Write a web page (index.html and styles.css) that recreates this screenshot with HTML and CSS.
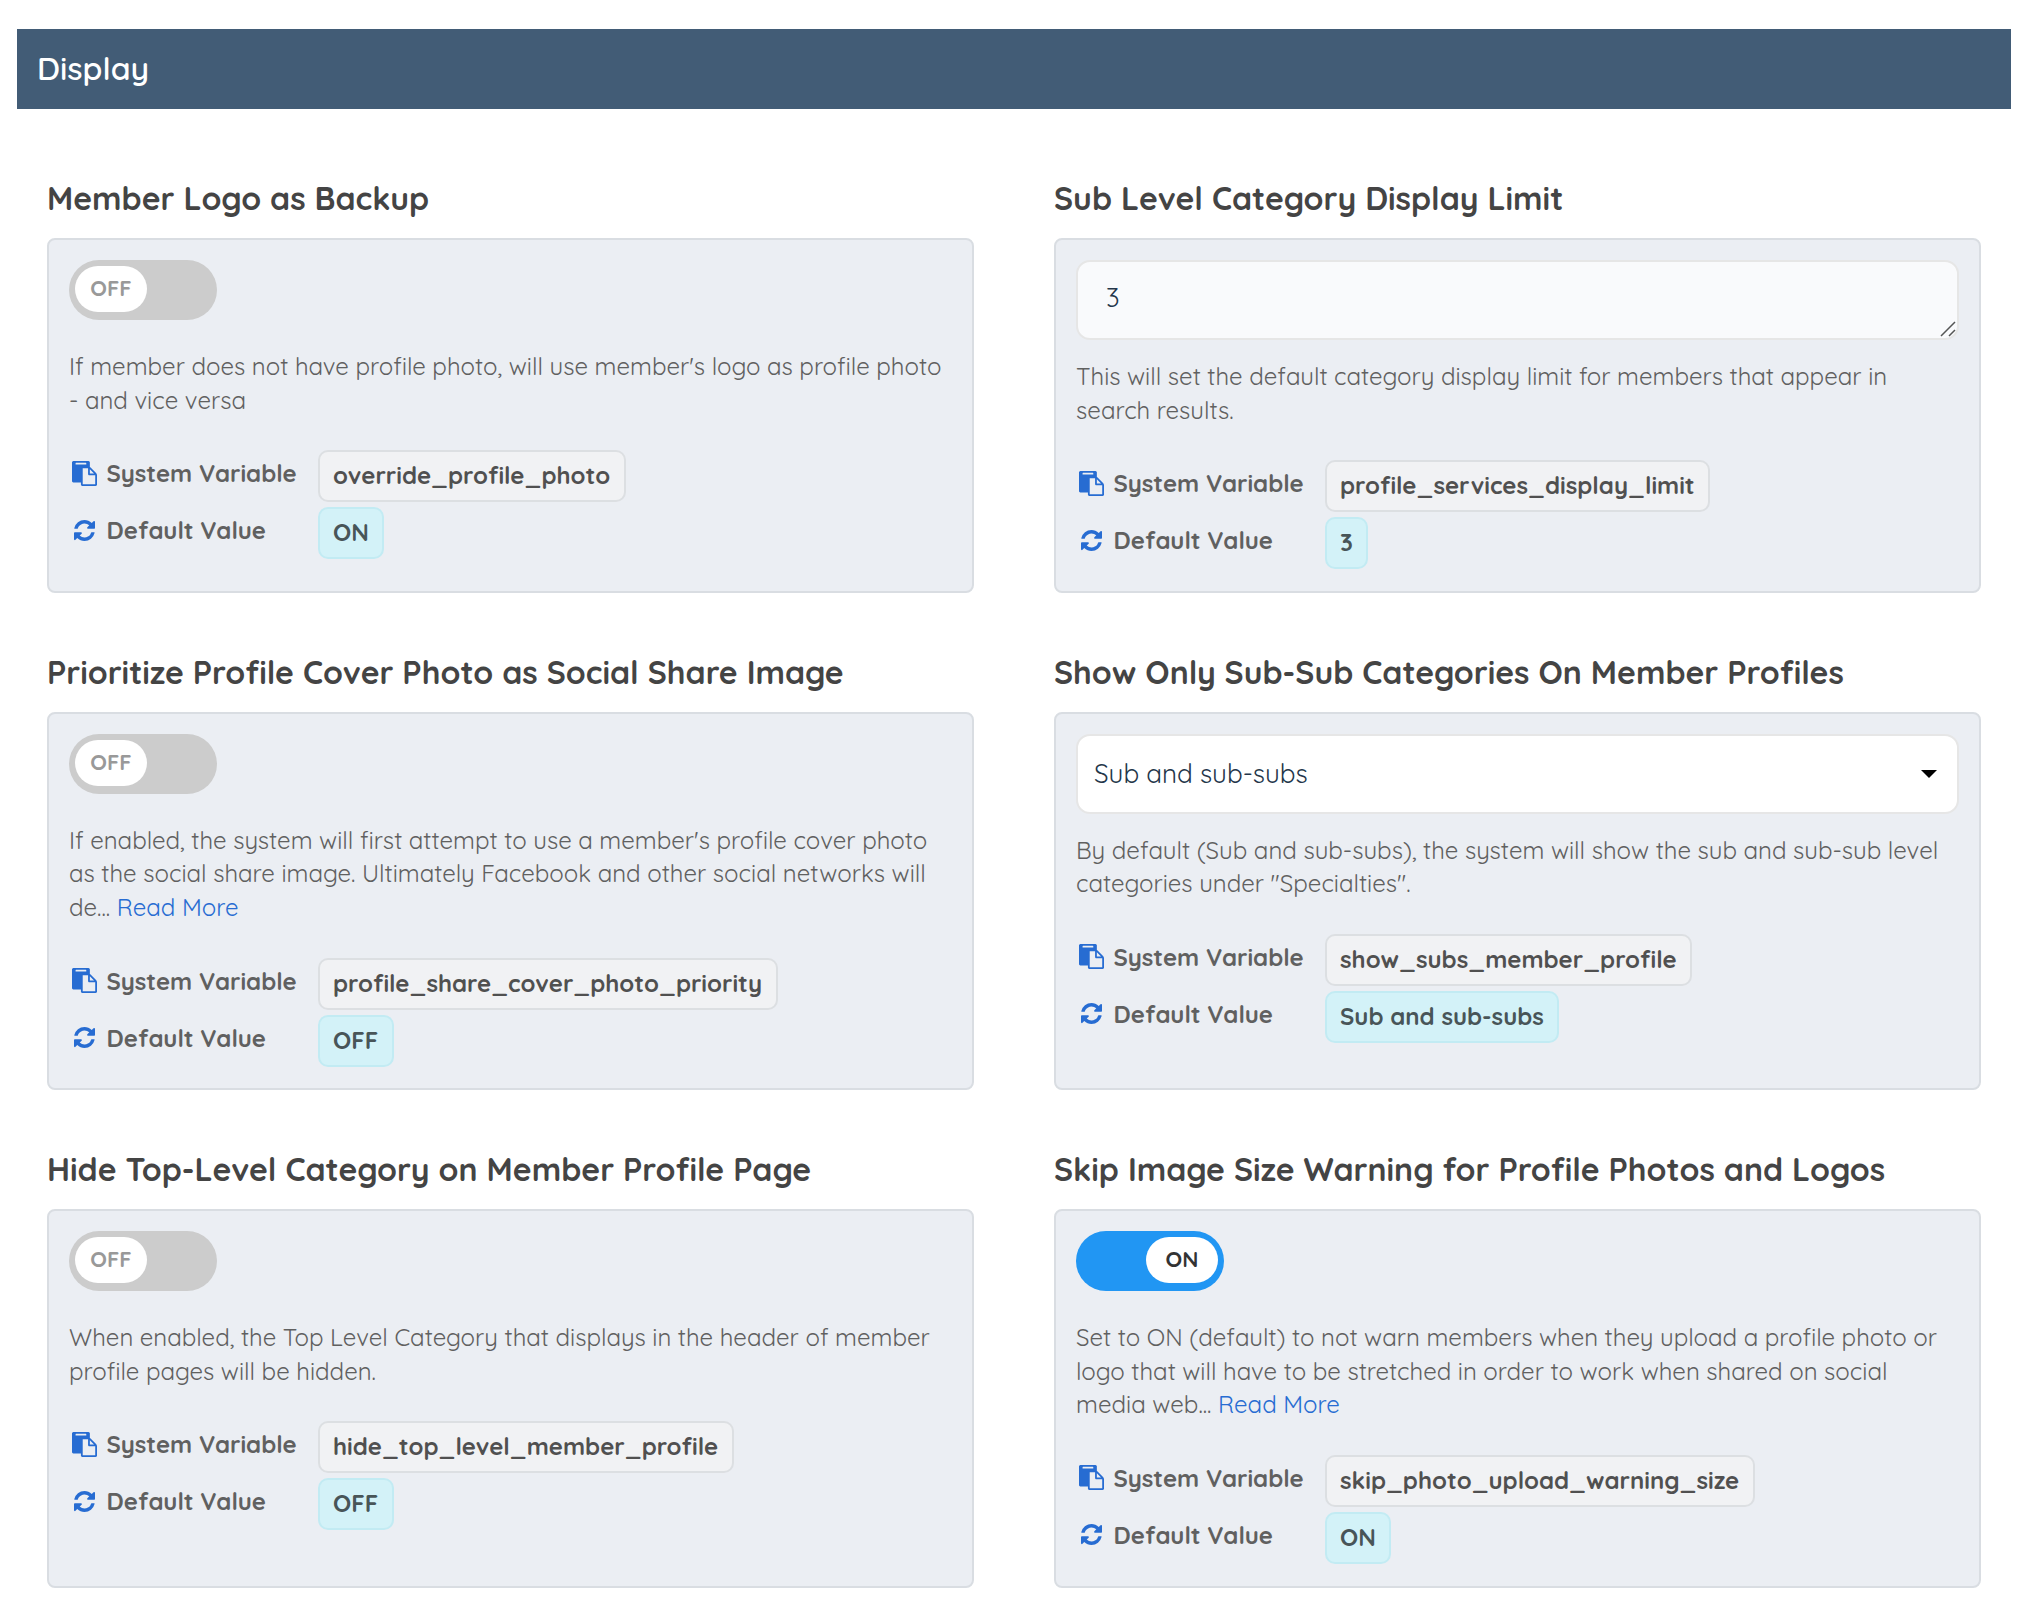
FILE: index.html
```html
<!DOCTYPE html>
<html lang="en">
<head>
  <meta charset="UTF-8">
  <title>Display Settings</title>
  <meta name="viewport" content="width=device-width, initial-scale=1.0">
  <link rel="stylesheet" href="styles.css">
</head>
<body>

  <!-- shared icons -->
  <svg class="sprite" aria-hidden="true">
    <symbol id="icon-paste" viewBox="0 0 1792 1792">
      <path d="M768 1664h896v-640h-416q-40 0-68-28t-28-68v-416h-384v1152zm256-1440v-64q0-13-9.5-22.5t-22.5-9.5h-704q-13 0-22.5 9.5t-9.5 22.5v64q0 13 9.5 22.5t22.5 9.5h704q13 0 22.5-9.5t9.5-22.5zm256 672h299l-299-299v299zm512 128v672q0 40-28 68t-68 28h-960q-40 0-68-28t-28-68v-160h-544q-40 0-68-28t-28-68v-1344q0-40 28-68t68-28h1088q40 0 68 28t28 68v328q21 13 36 28l408 408q28 28 48 76t20 88z"/>
    </symbol>
    <symbol id="icon-refresh" viewBox="0 0 1536 1536">
      <path d="M1511 928q0 5-1 7-64 268-268 434.500t-478 166.500q-146 0-282.500-55t-243.500-157l-129 129q-19 19-45 19t-45-19-19-45v-448q0-26 19-45t45-19h448q26 0 45 19t19 45-19 45l-137 137q71 66 161 102t187 36q134 0 250-65t186-179q11-17 53-117 8-23 30-23h192q13 0 22.500 9.500t9.500 22.500zm25-800v448q0 26-19 45t-45 19h-448q-26 0-45-19t-19-45 19-45l138-138q-148-137-349-137-134 0-250 65t-186 179q-11 17-53 117-8 23-30 23h-199q-13 0-22.500-9.500t-9.500-22.500v-7q65-268 270-434.500t480-166.500q146 0 284 55.500t245 156.500l130-129q19-19 45-19t45 19 19 45z"/>
    </symbol>
  </svg>

  <header>
    <h1>Display</h1>
  </header>

  <main class="settings">
    <section class="setting">
      <h2>Member Logo as Backup</h2>
      <div class="panel">
        <button type="button" class="toggle"><span>OFF</span></button>
        <p>If member does not have profile photo, will use member's logo as profile photo<br>- and vice versa</p>
        <dl>
          <dt><svg class="paste"><use href="#icon-paste"/></svg>System Variable</dt>
          <dd>override_profile_photo</dd>
          <dt><svg class="refresh"><use href="#icon-refresh"/></svg>Default Value</dt>
          <dd class="default">ON</dd>
        </dl>
      </div>
    </section>

    <section class="setting">
      <h2>Sub Level Category Display Limit</h2>
      <div class="panel">
        <div class="field">
          <textarea rows="1">3</textarea>
          <svg class="grip" viewBox="0 0 16 16"><path d="M1 15L15 1M9 15L15 9"/></svg>
        </div>
        <p>This will set the default category display limit for members that appear in<br>search results.</p>
        <dl>
          <dt><svg class="paste"><use href="#icon-paste"/></svg>System Variable</dt>
          <dd>profile_services_display_limit</dd>
          <dt><svg class="refresh"><use href="#icon-refresh"/></svg>Default Value</dt>
          <dd class="default">3</dd>
        </dl>
      </div>
    </section>

    <section class="setting">
      <h2>Prioritize Profile Cover Photo as Social Share Image</h2>
      <div class="panel">
        <button type="button" class="toggle"><span>OFF</span></button>
        <p>If enabled, the system will first attempt to use a member's profile cover photo<br>as the social share image. Ultimately Facebook and other social networks will<br>de... <a href="#">Read More</a></p>
        <dl>
          <dt><svg class="paste"><use href="#icon-paste"/></svg>System Variable</dt>
          <dd>profile_share_cover_photo_priority</dd>
          <dt><svg class="refresh"><use href="#icon-refresh"/></svg>Default Value</dt>
          <dd class="default">OFF</dd>
        </dl>
      </div>
    </section>

    <section class="setting">
      <h2>Show Only Sub-Sub Categories On Member Profiles</h2>
      <div class="panel">
        <div class="field select">
          <span>Sub and sub-subs</span>
          <i class="caret"></i>
        </div>
        <p>By default (Sub and sub-subs), the system will show the sub and sub-sub level<br>categories under "Specialties".</p>
        <dl>
          <dt><svg class="paste"><use href="#icon-paste"/></svg>System Variable</dt>
          <dd>show_subs_member_profile</dd>
          <dt><svg class="refresh"><use href="#icon-refresh"/></svg>Default Value</dt>
          <dd class="default">Sub and sub-subs</dd>
        </dl>
      </div>
    </section>

    <section class="setting">
      <h2>Hide Top-Level Category on Member Profile Page</h2>
      <div class="panel">
        <button type="button" class="toggle"><span>OFF</span></button>
        <p>When enabled, the Top Level Category that displays in the header of member<br>profile pages will be hidden.</p>
        <dl>
          <dt><svg class="paste"><use href="#icon-paste"/></svg>System Variable</dt>
          <dd>hide_top_level_member_profile</dd>
          <dt><svg class="refresh"><use href="#icon-refresh"/></svg>Default Value</dt>
          <dd class="default">OFF</dd>
        </dl>
      </div>
    </section>

    <section class="setting">
      <h2>Skip Image Size Warning for Profile Photos and Logos</h2>
      <div class="panel">
        <button type="button" class="toggle on"><span>ON</span></button>
        <p>Set to ON (default) to not warn members when they upload a profile photo or<br>logo that will have to be stretched in order to work when shared on social<br>media web... <a href="#">Read More</a></p>
        <dl>
          <dt><svg class="paste"><use href="#icon-paste"/></svg>System Variable</dt>
          <dd>skip_photo_upload_warning_size</dd>
          <dt><svg class="refresh"><use href="#icon-refresh"/></svg>Default Value</dt>
          <dd class="default">ON</dd>
        </dl>
      </div>
    </section>
  </main>

</body>
</html>
```
FILE: styles.css
```css
* {
  box-sizing: border-box;
}

body {
  font-family: Quicksand, Lato, sans-serif;
  margin: 0;
  padding: 29px 18px 0 17px;
  background-color: #fff;
  color: #606060;
}

.sprite {
  display: none;
}

header {
  display: flex;
  align-items: center;
  height: 80px;
  padding: 0 20px 2px;
  background-color: #425c76;
  color: white;
}

h1 {
  margin: 0;
  font-size: 32px;
  font-weight: 600;
}

.settings {
  display: grid;
  grid-template-columns: repeat(2, minmax(0, 1fr));
  gap: 59px 80px;
  padding: 69px 30px 0;
}

.setting {
  display: flex;
  flex-direction: column;
}

h2 {
  margin: 0 0 20px;
  color: #444;
  font-size: 32px;
  font-weight: bold;
  line-height: 40px;
  white-space: nowrap;
}

.panel {
  flex: 1;
  padding: 20px 20px 21.6px;
  border: 2px solid #d9dde2;
  border-radius: 8px;
  background-color: #ebeef3;
}

.toggle {
  display: flex;
  width: 148px;
  height: 60px;
  margin-bottom: 30px;
  padding: 6px;
  border: none;
  border-radius: 30px;
  background-color: #ccc;
  font-family: inherit;
  cursor: pointer;
}

.toggle span {
  width: 72px;
  height: 46px;
  border-radius: 23px;
  background-color: white;
  color: #999;
  font-size: 22px;
  font-weight: bold;
  line-height: 44px;
  text-align: center;
}

.toggle.on {
  justify-content: flex-end;
  background-color: #2196f3;
}

.toggle.on span {
  color: #333;
}

.field {
  position: relative;
  height: 80px;
  margin-bottom: 20px;
}

textarea,
.select {
  width: 100%;
  height: 80px;
  border: 2px solid #e6e6e6;
  border-radius: 14px;
  color: #24364a;
  font-family: inherit;
  font-size: 26px;
}

textarea {
  display: block;
  padding: 20px 28px;
  background-color: #f9fafc;
  line-height: 32px;
  resize: none;
}

.grip {
  position: absolute;
  right: 3px;
  bottom: 3px;
  width: 16px;
  height: 16px;
  fill: none;
  stroke: #555;
  stroke-width: 1.5;
}

.select {
  display: flex;
  align-items: center;
  justify-content: space-between;
  padding: 0 20px 0 16px;
  background-color: white;
}

.caret {
  border: 8px solid transparent;
  border-top-color: #000;
  border-bottom: none;
}

p {
  margin: 0 0 33px;
  font-size: 24px;
  line-height: 33.6px;
  white-space: nowrap;
}

a {
  color: #276cd2;
  text-decoration: none;
}

dl {
  display: grid;
  grid-template-columns: 249px auto;
  justify-content: start;
  justify-items: start;
  gap: 5px 0;
  margin: 0;
  font-size: 24px;
  font-weight: bold;
}

dt {
  display: flex;
  align-items: center;
  height: 52px;
  padding-bottom: 6px;
}

dt svg {
  fill: #276cd2;
}

.paste {
  width: 25px;
  height: 25px;
  margin: 0 9.5px 0 3px;
}

.refresh {
  width: 21px;
  height: 21px;
  margin: 0 11.5px 0 5px;
}

dd {
  height: 52px;
  margin: 0;
  padding: 0 13.5px 0 13px;
  border: 2px solid #dcdfe2;
  border-radius: 10px;
  background-color: #f1f2f4;
  color: #505050;
  line-height: 46px;
}

.default {
  border-color: #c2ebf3;
  background-color: #d3f2f8;
  color: #485558;
}
```
